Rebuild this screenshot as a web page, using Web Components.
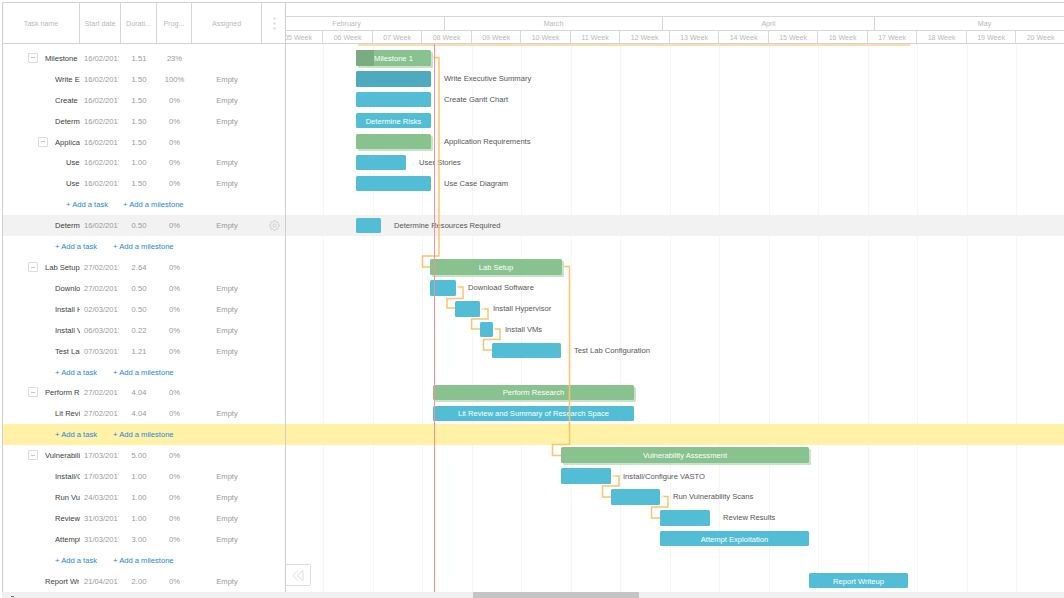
<!DOCTYPE html>
<html><head><meta charset="utf-8"><style>
html,body{margin:0;padding:0;background:#fff;overflow:hidden}
body{width:1064px;height:598px;font:7.6px "Liberation Sans",Arial,sans-serif}
</style></head><body>
<gantt-app></gantt-app>
<script>
const ROW=20.92;
const T=[
{n:'Milestone 1',s:'Milestone',l:0,d:'16/02/2017',u:'1.51',p:'23%',g:1,x:356,w:75,m:1,prog:18,inside:1},
{n:'Write Executive Summary',s:'Write E',l:1,d:'16/02/2017',u:'1.50',p:'100%',a:1,x:356,w:75,done:1,out:444},
{n:'Create Gantt Chart',s:'Create',l:1,d:'16/02/2017',u:'1.50',p:'0%',a:1,x:356,w:75,out:444},
{n:'Determine Risks',s:'Determ',l:1,d:'16/02/2017',u:'1.50',p:'0%',a:1,x:356,w:75,inside:1},
{n:'Application Requirements',s:'Applica',l:1,g:1,d:'16/02/2017',u:'1.50',p:'0%',x:356,w:75,m:1,out:444},
{n:'User Stories',s:'Use',l:2,d:'16/02/2017',u:'1.00',p:'0%',a:1,x:356,w:50,out:419},
{n:'Use Case Diagram',s:'Use',l:2,d:'16/02/2017',u:'1.50',p:'0%',a:1,x:356,w:75,out:444},
{add:66,add2:123},
{n:'Determine Resources Required',s:'Determ',l:1,d:'16/02/2017',u:'0.50',p:'0%',a:1,x:356,w:25,out:394,hover:1},
{add:55,add2:113},
{n:'Lab Setup',s:'Lab Setup',l:0,g:1,d:'27/02/2017',u:'2.64',p:'0%',x:430,w:132,m:1,inside:1},
{n:'Download Software',s:'Downlo',l:1,d:'27/02/2017',u:'0.50',p:'0%',a:1,x:430,w:26,out:468},
{n:'Install Hypervisor',s:'Install H',l:1,d:'02/03/2017',u:'0.50',p:'0%',a:1,x:455,w:25,out:493},
{n:'Install VMs',s:'Install V',l:1,d:'06/03/2017',u:'0.22',p:'0%',a:1,x:480,w:13,out:505},
{n:'Test Lab Configuration',s:'Test Lab',l:1,d:'07/03/2017',u:'1.21',p:'0%',a:1,x:492,w:69,out:574},
{add:55,add2:113},
{n:'Perform Research',s:'Perform R',l:0,g:1,d:'27/02/2017',u:'4.04',p:'0%',x:433,w:201,m:1,inside:1},
{n:'Lit Review and Summary of Research Space',s:'Lit Revi',l:1,d:'27/02/2017',u:'4.04',p:'0%',a:1,x:433,w:201,inside:1},
{add:55,add2:113,yellow:1},
{n:'Vulnerability Assessment',s:'Vulnerabili',l:0,g:1,d:'17/03/2017',u:'5.00',p:'0%',x:561,w:248,m:1,inside:1},
{n:'Install/Configure VASTO',s:'Install/C',l:1,d:'17/03/2017',u:'1.00',p:'0%',a:1,x:561,w:50,out:623},
{n:'Run Vulnerability Scans',s:'Run Vu',l:1,d:'24/03/2017',u:'1.00',p:'0%',a:1,x:611,w:49,out:673},
{n:'Review Results',s:'Review',l:1,d:'31/03/2017',u:'1.00',p:'0%',a:1,x:660,w:50,out:723},
{n:'Attempt Exploitation',s:'Attempt',l:1,d:'31/03/2017',u:'3.00',p:'0%',a:1,x:660,w:149,inside:1},
{add:55,add2:113},
{n:'Report Writeup',s:'Report Wr',l:0,d:'21/04/2017',u:'2.00',p:'0%',a:1,x:809,w:99,inside:1},
];
const TL=286;           // left edge of the timeline
const WEEK=49.5, WEEK0=273.8;

class GanttHeaderCell extends HTMLElement{
  constructor(){super();this.attachShadow({mode:'open'}).innerHTML=`<style>
  :host{display:flex;align-items:center;justify-content:center;box-sizing:border-box;height:100%;padding-top:1px;border-right:1px solid #d6d6d6;color:#b9b9b9;font-size:7.1px;overflow:hidden;white-space:nowrap}
  :host(:last-child){border-right:0;padding-left:1px}
  </style><slot></slot>`}
}
customElements.define('gantt-header-cell',GanttHeaderCell);

class GanttTaskRow extends HTMLElement{
  set task(t){
    const r=this.attachShadow({mode:'open'});
    const css=`<style>
    :host{display:flex;height:${ROW}px;align-items:center;box-sizing:border-box;white-space:nowrap;font-size:7.6px;color:#999}
    :host(.hover){background:#f2f2f2}
    :host(.yellow){background:#fff2a6}
    .c{flex:none;overflow:hidden;text-align:center;padding-top:1px;box-sizing:border-box}
    .name{width:77px;color:#3c3c3c;display:flex;align-items:center;text-align:left;overflow:hidden}
    .name span{display:block;overflow:hidden}
    .date{width:41px;text-align:left;padding-left:4px;padding-right:2px}
    .date i{display:block;overflow:hidden;font-style:normal}
    .dur{width:36px}.pro{width:35px}.ass{width:70px}
    .set{width:24px;display:flex;justify-content:center;padding-left:1px}
    .tog{flex:none;width:8px;height:8px;border:1px solid #dcdcdc;border-radius:1px;position:relative;margin-right:7px;margin-top:-1px}
    .tog:after{content:"";position:absolute;left:2px;right:2px;top:3.5px;height:1px;background:#c8c8c8}
    .add{color:#1b86e2;padding-left:var(--a);padding-top:1px;display:flex}
    .add b{font-weight:normal;position:relative}
    .add b+b{margin-left:var(--g)}
    svg{display:block}
    </style>`;
    if(t.add){
      r.innerHTML=css+`<div class="add" style="--a:${t.add-3}px;--g:${t.add2-t.add-42}px"><b style="width:42px">+ Add a task</b><b>+ Add a milestone</b></div>`;
      if(t.yellow)this.classList.add('yellow');
      return;
    }
    const lead= t.g ? 25+t.l*10 : 42+t.l*10+(t.l==2?1:0);
    r.innerHTML=css+`<div class="c name" style="padding-left:${lead}px">${t.g?'<div class="tog"></div>':''}<span>${t.s}</span></div>
    <div class="c date"><i>${t.d}</i></div><div class="c dur">${t.u}</div><div class="c pro">${t.p}</div><div class="c ass">${t.a?'Empty':''}</div>
    <div class="c set">${t.hover?`<svg width="11" height="11" viewBox="0 0 24 24" fill="none" stroke="#c4c4c4" stroke-width="1.7"><circle cx="12" cy="12" r="3.4"/><path d="M19.4 15a1.65 1.65 0 0 0 .33 1.82l.06.06a2 2 0 1 1-2.83 2.83l-.06-.06a1.65 1.65 0 0 0-2.82 1.17V21a2 2 0 1 1-4 0v-.09a1.65 1.65 0 0 0-2.82-1.17l-.06.06a2 2 0 1 1-2.83-2.83l.06-.06A1.65 1.65 0 0 0 3.26 14H3a2 2 0 1 1 0-4h.09a1.65 1.65 0 0 0 1.17-2.82l-.06-.06a2 2 0 1 1 2.83-2.83l.06.06A1.65 1.65 0 0 0 10 3.17V3a2 2 0 1 1 4 0v.09a1.65 1.65 0 0 0 2.82 1.17l.06-.06a2 2 0 1 1 2.83 2.83l-.06.06A1.65 1.65 0 0 0 20.91 10H21a2 2 0 1 1 0 4h-.09a1.65 1.65 0 0 0-1.51 1z"/></svg>`:''}</div>`;
    if(t.hover)this.classList.add('hover');
  }
}
customElements.define('gantt-task-row',GanttTaskRow);

class GanttGrid extends HTMLElement{
  connectedCallback(){
    const r=this.attachShadow({mode:'open'});
    r.innerHTML=`<style>
    :host{display:flex;flex-direction:column;width:283px;flex:none;box-sizing:border-box;border-right:1px solid #cfcfcf;overflow:hidden;height:100%}
    .h{display:flex;height:41px;flex:none;border-bottom:1px solid #d2d2d2;box-sizing:border-box}
    .rows{padding-top:3.5px}
    </style><div class="h">
    <gantt-header-cell style="width:77px">Task name</gantt-header-cell>
    <gantt-header-cell style="width:41px">Start date</gantt-header-cell>
    <gantt-header-cell style="width:36px">Durati...</gantt-header-cell>
    <gantt-header-cell style="width:35px">Prog...</gantt-header-cell>
    <gantt-header-cell style="width:70px">Assigned</gantt-header-cell>
    <gantt-header-cell style="width:23px"><svg width="3" height="13" viewBox="0 0 3 13" fill="#dedede"><circle cx="1.5" cy="1.5" r="1.3"/><circle cx="1.5" cy="6.5" r="1.3"/><circle cx="1.5" cy="11.5" r="1.3"/></svg></gantt-header-cell>
    </div><div class="rows"></div>`;
    const box=r.querySelector('.rows');
    T.forEach(t=>{const e=document.createElement('gantt-task-row');e.task=t;box.append(e)});
  }
}
customElements.define('gantt-grid',GanttGrid);

class GanttBar extends HTMLElement{
  set task(t){
    const r=this.attachShadow({mode:'open'});
    const base=t.m?'#88c28e':(t.done?'#4eaabf':'#53bdd5');
    r.innerHTML=`<style>
    :host{display:flex;align-items:center;height:${ROW}px;white-space:nowrap;font-size:7.6px}
    .b{flex:none;box-sizing:border-box;height:15.4px;padding-top:1px;border-radius:1.5px;background:${base};color:#fff;position:relative;display:flex;align-items:center;justify-content:center;${t.m?'box-shadow:2px 2px 0 #c8e3ca;':''}}
    .p{position:absolute;left:0;top:0;bottom:0;background:#7bac7f;border-radius:1.5px 0 0 1.5px}
    .l{position:relative}
    .o{flex:none;color:#555}
    </style>${t.x?`
    <div class="b" style="margin-left:${t.x-TL}px;width:${t.w}px">${t.prog?`<div class="p" style="width:${t.prog}px"></div>`:''}${t.inside?`<span class="l">${t.n}</span>`:''}</div>${t.out?`<span class="o" style="margin-left:${t.out-t.x-t.w}px">${t.n}</span>`:''}`:''}`;
  }
}
customElements.define('gantt-bar',GanttBar);

class GanttRowBand extends HTMLElement{
  constructor(){super();this.attachShadow({mode:'open'}).innerHTML=`<style>:host{display:block;height:${ROW}px}:host(.hover){background:#f2f2f2}:host(.yellow){background:#fff2a6}</style>`}
}
customElements.define('gantt-row-band',GanttRowBand);

class GanttTimeline extends HTMLElement{
  connectedCallback(){
    const r=this.attachShadow({mode:'open'});
    const months=[['February',196],['March',218],['April',212],['May',220]];
    const wk=[];for(let i=0;i<16;i++)wk.push(String(i+5).padStart(2,'0')+' Week');
    const lines=[];for(let i=0;i<16;i++)lines.push(WEEK0+WEEK*(i+1)-TL);
    const C=[
      [[435,57.5],[439,57.5],[439,256],[422.5,256],[422.5,267],[430,267]],
      [[564,266.5],[569.5,266.5],[569.5,444.5],[552.5,444.5],[552.5,455.5],[561,455.5]],
      [[459,287],[463,287],[463,298.5],[447,298.5],[447,308],[455,308]],
      [[484,309],[488,309],[488,319],[471.5,319],[471.5,329],[480,329]],
      [[495,329],[500,329],[500,339.5],[483.5,339.5],[483.5,350],[492,350]],
      [[615,476],[619,476],[619,486],[602.5,486],[602.5,497],[611,497]],
      [[664,496.5],[668,496.5],[668,507],[651.5,507],[651.5,518],[660,518]],
    ];
    const Y0=44;
    const stubs=[[432,57.5],[562,266.5],[456.5,287],[481,309],[493.5,329],[612,476],[661,496.5]];
    r.innerHTML=`<style>
    :host{display:flex;flex-direction:column;flex:1;min-width:0;overflow:hidden;height:100%;position:relative}
    .mon,.wk{display:flex;flex:none;box-sizing:border-box;color:#b9b9b9;font-size:7.1px;text-align:center;white-space:nowrap}
    .mon{height:14px;border-top:1px solid #d6d6d6;margin-top:13px;line-height:15px}
    .mon span{flex:none;box-sizing:border-box;border-right:1px solid #d6d6d6}
    .wk{height:14px;border-top:1px solid #d6d6d6;border-bottom:1px solid #d2d2d2;line-height:14px;margin-left:${WEEK0-TL}px}
    .wk span{flex:none;width:${WEEK}px;box-sizing:border-box;border-right:1px solid #d9d9d9}
    .canvas{position:relative;flex:1;min-height:0}
    .bands{position:absolute;inset:0;padding-top:3.5px;box-sizing:border-box}
    .bars{position:absolute;inset:0;padding-top:3.5px;box-sizing:border-box}
    .gl{position:absolute;top:0;bottom:0;width:1px;background:#f6f6f6}
    .cp{position:absolute;left:${358-TL}px;top:0;width:552px;height:2px;background:#fbdfb2}
    .today{position:absolute;left:${434-TL}px;top:0;bottom:0;width:1px;background:#fb8f8f}
    svg.links{position:absolute;left:0;top:0;overflow:visible}
    </style>
    <div class="mon" style="margin-left:${249-TL}px">${months.map(m=>`<span style="width:${m[1]}px">${m[0]}</span>`).join('')}</div>
    <div class="wk">${wk.map(w=>`<span>${w}</span>`).join('')}</div>
    <div class="canvas">
      ${lines.map(x=>`<div class="gl" style="left:${x}px"></div>`).join('')}
      <div class="bands">${T.map(t=>`<gantt-row-band class="${t.hover?'hover':t.yellow?'yellow':''}"></gantt-row-band>`).join('')}</div>
      <div class="bars"></div>
      <svg class="links" width="778" height="548" fill="none" stroke="#fdc26c" stroke-width="1.5">
      ${C.map(p=>`<polyline points="${p.map(q=>(q[0]-TL)+','+(q[1]-Y0)).join(' ')}"/>`).join('')}
      ${stubs.map(q=>`<path d="M${q[0]-TL} ${q[1]-Y0}l2.4-1.6v3.2z" fill="#fdd9a0" stroke="none"/>`).join('')}
      </svg>
      <div class="cp"></div>
      <div class="today"></div>
      <gantt-collapse></gantt-collapse>
    </div>`;
    const box=r.querySelector('.bars');
    T.forEach(t=>{const e=document.createElement('gantt-bar');e.task=t;box.append(e)});
  }
}
customElements.define('gantt-timeline',GanttTimeline);

class GanttCollapse extends HTMLElement{
  constructor(){super();this.attachShadow({mode:'open'}).innerHTML=`<style>
  :host{position:absolute;left:0;top:520px;width:25px;height:22px;box-sizing:border-box;border:1px solid #dcdcdc;border-left:0;border-radius:0 2px 2px 0;background:#fff;display:flex;align-items:center;justify-content:center}
  </style><svg width="12" height="11" viewBox="0 0 12 11" fill="none" stroke="#dedede" stroke-width="1"><path d="M6 .5 .8 5.5 6 10.5"/><path d="M11 .5 5 5.5 11 10.5V.5z"/></svg>`}
}
customElements.define('gantt-collapse',GanttCollapse);

class GanttScrollbar extends HTMLElement{
  constructor(){super();this.attachShadow({mode:'open'}).innerHTML=`<style>
  :host{display:block;height:6px;background:#f0f0f0;flex:none;padding-left:471px;position:relative}
  div{width:166px;height:6px;background:#c4c4c4}
  i{position:absolute;left:9px;top:4px;width:3px;height:1px;background:#666}
  </style><div></div><i></i>`}
}
customElements.define('gantt-scrollbar',GanttScrollbar);

class GanttApp extends HTMLElement{
  constructor(){super();this.attachShadow({mode:'open'}).innerHTML=`<style>
  :host{display:flex;flex-direction:column;box-sizing:border-box;width:1064px;height:598px;padding:2px 0 0 2px}
  .main{flex:1;min-height:0;display:flex;border-top:1px solid #d2d2d2;border-left:1px solid #cfcfcf;box-sizing:border-box}
  </style><div class="main"><gantt-grid></gantt-grid><gantt-timeline></gantt-timeline></div><gantt-scrollbar></gantt-scrollbar>`}
}
customElements.define('gantt-app',GanttApp);
</script>
</body></html>
